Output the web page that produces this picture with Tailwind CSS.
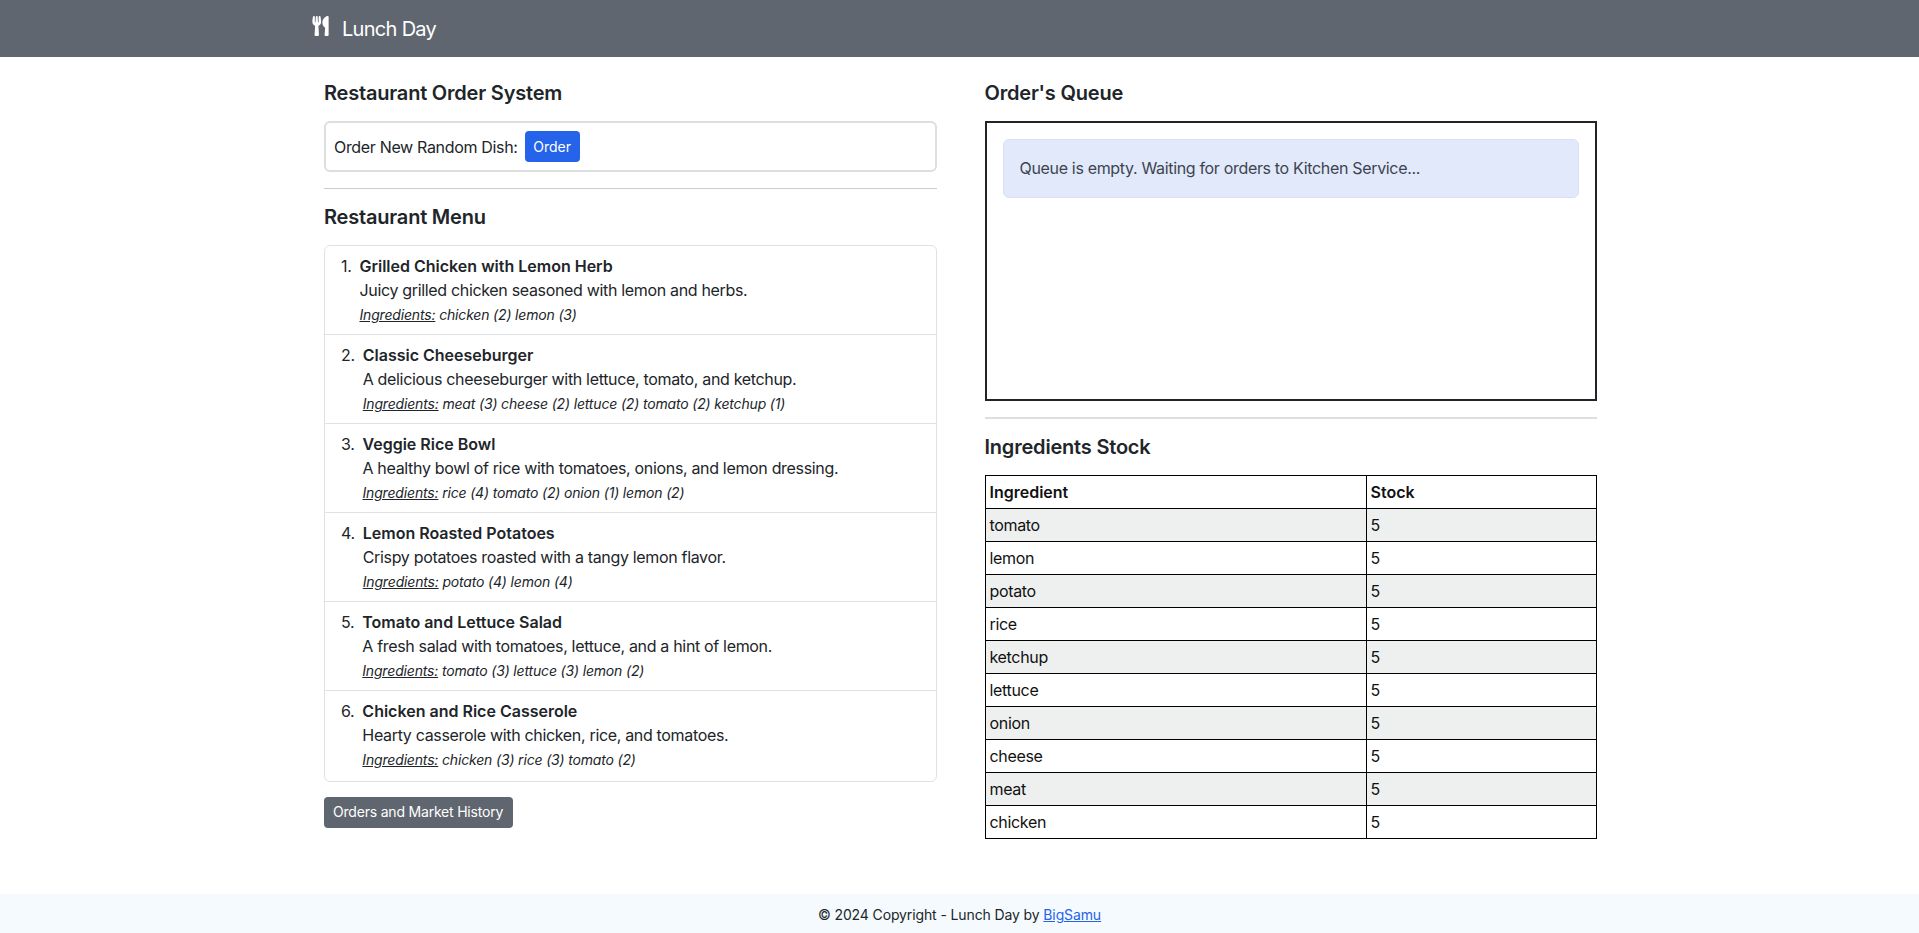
<!DOCTYPE html>
<html lang="en">
<head>
  <meta charset="UTF-8">
  <title>Lunch Day</title>
  <script src="https://cdn.jsdelivr.net/npm/@tailwindcss/browser@4"></script>
</head>
<body class="bg-white text-[#212529] font-['Inter','Liberation_Sans',sans-serif] text-base tracking-[-0.33px] h-[933px] flex flex-col">

  <!-- Navbar -->
  <header class="h-[57px] bg-[#5f666f] text-white flex items-center pl-[312px] shrink-0">
    <svg class="w-[17px] h-[20px] -mt-[5px]" viewBox="0 0 416 512" fill="currentColor"><path d="M207.9 15.2c.8 4.7 16.1 94.5 16.1 128.8 0 52.3-27.8 89.6-68.9 104.6L168 486.7c.7 13.7-10.2 25.3-24 25.3H80c-13.7 0-24.7-11.5-24-25.3l12.9-238.1C27.7 233.6 0 196.2 0 144 0 109.6 15.3 19.9 16.1 15.2 19.3-5.1 61.4-5.4 64 16.3v141.2c1.3 3.4 15.1 3.2 16 0 1.4-25.3 7.9-139.2 8-141.8 3.3-20.8 44.7-20.8 47.9 0 .2 2.7 6.6 116.5 8 141.8.9 3.2 14.8 3.4 16 0V16.3c2.6-21.6 44.8-21.4 48-1.1zm119.2 285.7l-15 185.1c-1.2 14 9.9 26 23.9 26h56c13.3 0 24-10.7 24-24V24c0-13.2-10.7-24-24-24-82.5 0-221.4 178.5-64.9 300.9z"/></svg>
    <span class="ml-[13px] text-xl leading-[30px] tracking-[-0.7px]">Lunch Day</span>
  </header>

  <main class="flex-1 pl-[324px] pr-[322px] pt-[24px] grid grid-cols-2 gap-x-12 items-start">

    <!-- Left column -->
    <section>
      <h2 class="text-xl font-semibold leading-6 tracking-[-0.2px] mb-[16px]">Restaurant Order System</h2>
      <div class="h-[51px] border-2 border-[#dcdee0] rounded-md flex items-center px-2 gap-[7px]">
        <span>Order New Random Dish:</span>
        <button class="h-[31px] w-[55px] bg-[#2563eb] text-white text-sm tracking-normal rounded">Order</button>
      </div>
      <hr class="mt-4 mb-4 border-t border-[#c8ccd0]">
      <h2 class="text-xl font-semibold leading-6 tracking-[-0.2px] mt-4 mb-4">Restaurant Menu</h2>

      <ol class="border border-[#dee2e6] rounded-md divide-y divide-[#dee2e6]">
        <li class="h-[89.1px] pl-4 pt-2 flex gap-2">
          <span class="leading-6">1.</span>
          <div>
            <div class="font-semibold leading-6 tracking-normal">Grilled Chicken with Lemon Herb</div>
            <div class="leading-6">Juicy grilled chicken seasoned with lemon and herbs.</div>
            <div class="text-sm italic leading-6 mt-px tracking-[-0.17px]"><u>Ingredients:</u> chicken (2) lemon (3)</div>
          </div>
        </li>
        <li class="h-[89.1px] pl-4 pt-2 flex gap-2">
          <span class="leading-6">2.</span>
          <div>
            <div class="font-semibold leading-6 tracking-normal">Classic Cheeseburger</div>
            <div class="leading-6">A delicious cheeseburger with lettuce, tomato, and ketchup.</div>
            <div class="text-sm italic leading-6 mt-px tracking-[-0.17px]"><u>Ingredients:</u> meat (3) cheese (2) lettuce (2) tomato (2) ketchup (1)</div>
          </div>
        </li>
        <li class="h-[89.1px] pl-4 pt-2 flex gap-2">
          <span class="leading-6">3.</span>
          <div>
            <div class="font-semibold leading-6 tracking-normal">Veggie Rice Bowl</div>
            <div class="leading-6">A healthy bowl of rice with tomatoes, onions, and lemon dressing.</div>
            <div class="text-sm italic leading-6 mt-px tracking-[-0.17px]"><u>Ingredients:</u> rice (4) tomato (2) onion (1) lemon (2)</div>
          </div>
        </li>
        <li class="h-[89.1px] pl-4 pt-2 flex gap-2">
          <span class="leading-6">4.</span>
          <div>
            <div class="font-semibold leading-6 tracking-normal">Lemon Roasted Potatoes</div>
            <div class="leading-6">Crispy potatoes roasted with a tangy lemon flavor.</div>
            <div class="text-sm italic leading-6 mt-px tracking-[-0.17px]"><u>Ingredients:</u> potato (4) lemon (4)</div>
          </div>
        </li>
        <li class="h-[89.1px] pl-4 pt-2 flex gap-2">
          <span class="leading-6">5.</span>
          <div>
            <div class="font-semibold leading-6 tracking-normal">Tomato and Lettuce Salad</div>
            <div class="leading-6">A fresh salad with tomatoes, lettuce, and a hint of lemon.</div>
            <div class="text-sm italic leading-6 mt-px tracking-[-0.17px]"><u>Ingredients:</u> tomato (3) lettuce (3) lemon (2)</div>
          </div>
        </li>
        <li class="h-[89.1px] pl-4 pt-2 flex gap-2">
          <span class="leading-6">6.</span>
          <div>
            <div class="font-semibold leading-6 tracking-normal">Chicken and Rice Casserole</div>
            <div class="leading-6">Hearty casserole with chicken, rice, and tomatoes.</div>
            <div class="text-sm italic leading-6 mt-px tracking-[-0.17px]"><u>Ingredients:</u> chicken (3) rice (3) tomato (2)</div>
          </div>
        </li>
      </ol>

      <button class="mt-[15px] h-[31px] pl-[9px] pr-[10px] bg-[#5f666f] text-white text-sm tracking-[-0.2px] rounded">Orders and Market History</button>
    </section>

    <!-- Right column -->
    <section>
      <h2 class="text-xl font-semibold leading-6 tracking-[-0.2px] mb-[16px]">Order's Queue</h2>
      <div class="h-[280px] border-2 border-[#212529] p-4">
        <div class="h-[59px] bg-[#e2e9fb] border border-[#d8e1f7] rounded-md flex items-center px-4 pb-0.5 text-[#3c4450]">Queue is empty. Waiting for orders to Kitchen Service...</div>
      </div>
      <hr class="mt-4 mb-[14px] border-t-2 border-[#dedede]">
      <h2 class="text-xl font-semibold leading-6 tracking-[-0.2px] mt-[16px] mb-4">Ingredients Stock</h2>

      <table class="w-full border-collapse table-fixed text-[#111]">
        <thead>
          <tr class="h-[33px]">
            <th class="w-[381px] border border-black px-1 text-left font-semibold tracking-normal">Ingredient</th>
            <th class="border border-black px-1 text-left font-semibold tracking-normal">Stock</th>
          </tr>
        </thead>
        <tbody>
          <tr class="h-[33px] bg-[#eef0ef]"><td class="border border-black px-1">tomato</td><td class="border border-black px-1">5</td></tr>
          <tr class="h-[33px]"><td class="border border-black px-1">lemon</td><td class="border border-black px-1">5</td></tr>
          <tr class="h-[33px] bg-[#eef0ef]"><td class="border border-black px-1">potato</td><td class="border border-black px-1">5</td></tr>
          <tr class="h-[33px]"><td class="border border-black px-1">rice</td><td class="border border-black px-1">5</td></tr>
          <tr class="h-[33px] bg-[#eef0ef]"><td class="border border-black px-1">ketchup</td><td class="border border-black px-1">5</td></tr>
          <tr class="h-[33px]"><td class="border border-black px-1">lettuce</td><td class="border border-black px-1">5</td></tr>
          <tr class="h-[33px] bg-[#eef0ef]"><td class="border border-black px-1">onion</td><td class="border border-black px-1">5</td></tr>
          <tr class="h-[33px]"><td class="border border-black px-1">cheese</td><td class="border border-black px-1">5</td></tr>
          <tr class="h-[33px] bg-[#eef0ef]"><td class="border border-black px-1">meat</td><td class="border border-black px-1">5</td></tr>
          <tr class="h-[33px]"><td class="border border-black px-1">chicken</td><td class="border border-black px-1">5</td></tr>
        </tbody>
      </table>
    </section>
  </main>

  <!-- Footer -->
  <footer class="h-[39px] bg-[#f4fafd] flex items-center justify-center text-sm tracking-[-0.12px] pt-[3px] shrink-0">
    <span>© 2024 Copyright - Lunch Day by <a href="#" class="text-[#2563eb] underline">BigSamu</a></span>
  </footer>

</body>
</html>
